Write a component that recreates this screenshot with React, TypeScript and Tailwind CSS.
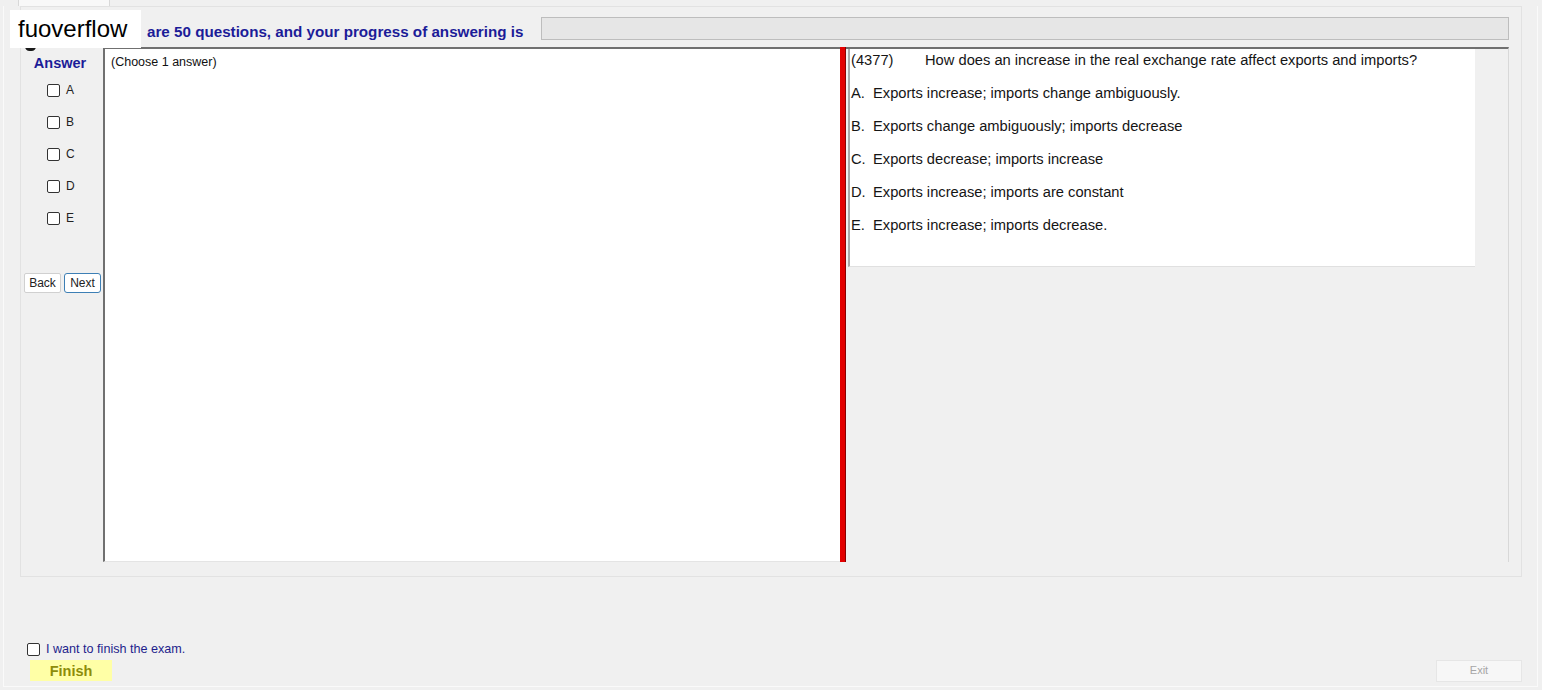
import React from "react";

const Box = () => (
  <span className="inline-block w-[13px] h-[13px] border border-[#333333] rounded-[2px] bg-white shrink-0" />
);

const options = [
  { k: "A.", t: "Exports increase; imports change ambiguously." },
  { k: "B.", t: "Exports change ambiguously; imports decrease" },
  { k: "C.", t: "Exports decrease; imports increase" },
  { k: "D.", t: "Exports increase; imports are constant" },
  { k: "E.", t: "Exports increase; imports decrease." },
];

export default function App() {
  return (
    <div className="relative w-[1542px] h-[690px] overflow-hidden bg-[#f0f0f0] font-['Liberation_Sans',Arial,sans-serif] text-[#111]">
      {/* top tab strip */}
      <div className="h-[6px] flex">
        <div className="ml-[18px] w-[92px] h-[6px] bg-[#f8f8f8] border-x border-[#d8d8d8]" />
      </div>

      {/* outer frame */}
      <div className="ml-[3px] mr-[4px] h-[681px] border-l border-r border-b border-[#fafafa] flex flex-col">
        {/* inner panel */}
        <div className="ml-[16px] mr-[15px] h-[571px] border border-[#e2e2e2] pl-[1px] pr-[12px] pt-[10px] flex flex-col">
          {/* header row */}
          <div className="h-[23px] flex items-start">
            <div className="w-[519px] pl-[125px] pt-[6px] text-[15.2px] leading-[18px] font-bold text-[#1c1c98] whitespace-nowrap">
              are 50 questions, and your progress of answering is
            </div>
            <div className="flex-1 h-[23px] bg-[#e6e6e6] border border-[#bdbdbd]" />
          </div>

          {/* content */}
          <div className="mt-[7px] h-[515px] flex">
            {/* answer column */}
            <div className="w-[81px] flex flex-col pt-[8px]">
              <div className="h-[16px] leading-[16px] text-center text-[14.5px] font-bold text-[#1c1c98] pr-[5px]">
                Answer
              </div>
              <div className="mt-[3px] flex flex-col">
                {["A", "B", "C", "D", "E"].map((l) => (
                  <div key={l} className="h-[32px] flex items-center pl-[25px] gap-[6px]">
                    <Box />
                    <span className="text-[12px] text-[#222]">{l}</span>
                  </div>
                ))}
              </div>
              <div className="mt-[39px] flex gap-[3px] pl-[2px]">
                <button className="w-[37px] h-[20px] bg-white border border-[#d0d0d0] rounded-[2px] text-[12px] text-[#222] leading-none">
                  Back
                </button>
                <button className="w-[37px] h-[20px] bg-white border border-[#3d7fb5] rounded-[3px] text-[12px] text-[#222] leading-none">
                  Next
                </button>
              </div>
            </div>

            {/* white pane */}
            <div className="w-[737px] bg-white border-l-2 border-t-2 border-[#707070] border-b border-b-[#e4e4e4] pl-[6px] pt-[6px]">
              <div className="text-[12.5px] leading-[14px] text-[#111]">(Choose 1 answer)</div>
            </div>

            {/* red splitter */}
            <div className="w-[6px] bg-[#e30000] border-r border-[#8a0000]" />

            {/* right pane */}
            <div className="flex-1 border-t-2 border-[#707070] border-r border-r-[#d8d8d8] pl-[2px]">
              <div className="w-[627px] h-[218px] bg-white border-l-2 border-[#a8a8a8] border-b border-b-[#e0e0e0] pl-[1px] flex flex-col">
                <div className="h-[20px] pt-[3px] flex items-center text-[14.7px] text-[#151515] whitespace-nowrap">
                  <span className="w-[74px]">(4377)</span>
                  <span>How does an increase in the real exchange rate affect exports and imports?</span>
                </div>
                <div className="mt-[8px] flex flex-col">
                  {options.map((o) => (
                    <div key={o.k} className="h-[33px] flex items-center text-[14.7px] text-[#151515] whitespace-nowrap">
                      <span className="w-[22px]">{o.k}</span>
                      <span>{o.t}</span>
                    </div>
                  ))}
                </div>
              </div>
            </div>
          </div>
        </div>

        {/* bottom area */}
        <div className="mt-[63px] pl-[23px] flex items-center gap-[6px]">
          <Box />
          <span className="text-[12.6px] text-[#1e1e8c]">I want to finish the exam.</span>
        </div>
        <div className="mt-[1px] flex items-center justify-between pl-[26px] pr-[15px]">
          <button className="w-[82px] h-[21px] bg-[#ffffa6] text-[14.5px] font-bold text-[#8d8d0a] leading-none">
            Finish
          </button>
          <button className="w-[86px] h-[22px] bg-[#f7f7f7] border border-[#e6e6e6] text-[11px] text-[#a6a6a6] leading-none">
            Exit
          </button>
        </div>
      </div>

      {/* watermark overlay */}
      <div className="absolute left-[25px] top-[42px] w-[11px] h-[9px] rounded-full bg-[#1a1a1a]" />
      <div className="absolute left-[10px] top-[10px] w-[131px] h-[38px] bg-white flex items-center pl-[8px]">
        <span className="text-[24px] text-black leading-none">fuoverflow</span>
      </div>
    </div>
  );
}
